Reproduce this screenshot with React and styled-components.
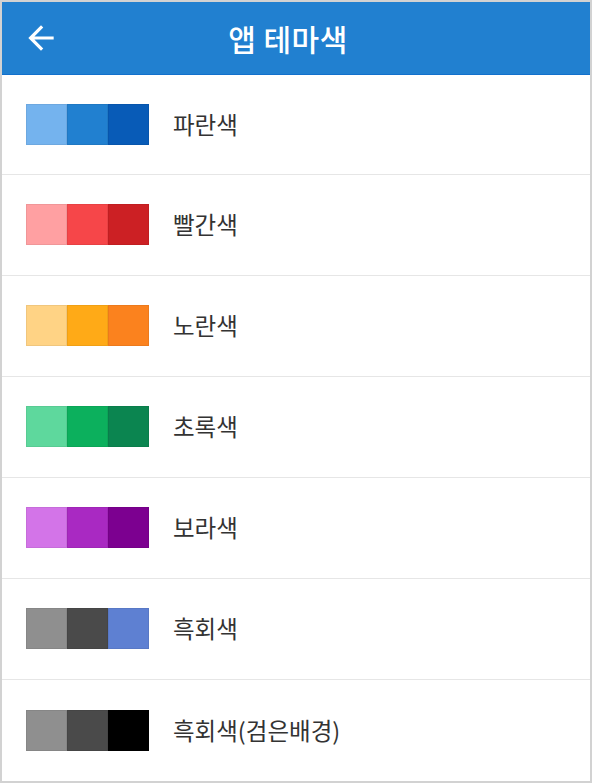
import React from "react";
import styled, { createGlobalStyle } from "styled-components";

const Global = createGlobalStyle`
  html, body { margin: 0; padding: 0; background: #fff; }
  body { font-family: "Noto Sans CJK KR", "Noto Sans", sans-serif; }
  * { box-sizing: border-box; }
`;

const Frame = styled.div`
  width: 592px;
  height: 783px;
  border: 2px solid #d2d2d2;
  display: flex;
  flex-direction: column;
  background: #fff;
  overflow: hidden;
`;

const Header = styled.header`
  height: 73px;
  flex: none;
  background: #2180d0;
  border-bottom: 1px solid #1270cc;
  display: grid;
  grid-template-columns: 80px 1fr 96px;
  align-items: center;
`;

const BackButton = styled.button`
  border: 0;
  background: transparent;
  padding: 0;
  margin-left: 20px;
  width: 38px;
  height: 38px;
  display: flex;
  align-items: center;
  justify-content: center;
  cursor: pointer;
`;

const Title = styled.h1`
  margin: 0;
  text-align: center;
  color: #fff;
  font-size: 30px;
  font-weight: 500;
  line-height: 1;
  letter-spacing: 0.5px;
`;

const List = styled.ul`
  list-style: none;
  margin: 0;
  padding: 0;
  display: flex;
  flex-direction: column;
`;

const Row = styled.li`
  height: ${(p) => (p.$first ? "100px" : "101px")};
  flex: none;
  display: flex;
  align-items: center;
  gap: 24px;
  padding: 0 0 0 24px;
  border-bottom: ${(p) => (p.$last ? "none" : "1px solid #e6e6e6")};
`;

const Swatch = styled.div`
  display: flex;
  height: 41px;
  flex: none;
  margin-top: ${(p) => (p.$last ? "0" : "-1px")};
`;

const Cell = styled.div`
  width: 41px;
  height: 41px;
  background: ${(p) => p.$color};
  box-shadow: inset 0 0 0 1px rgba(0, 0, 0, 0.06);
`;

const Label = styled.span`
  font-size: 23.5px;
  color: #333;
  line-height: 1;
`;

const themes = [
  { name: "파란색", colors: ["#74b3ee", "#2180d0", "#085bb7"] },
  { name: "빨간색", colors: ["#ffa0a2", "#f64649", "#cc2024"] },
  { name: "노란색", colors: ["#ffd385", "#ffaa17", "#fb821e"] },
  { name: "초록색", colors: ["#5ed89d", "#0cb05d", "#0b8550"] },
  { name: "보라색", colors: ["#d374e8", "#a929c2", "#7c0090"] },
  { name: "흑회색", colors: ["#8f8f8f", "#4a4a4a", "#5e80d2"] },
  { name: "흑회색(검은배경)", colors: ["#8f8f8f", "#4a4a4a", "#000000"] },
];

export default function App() {
  return (
    <>
      <Global />
      <Frame>
        <Header>
          <BackButton aria-label="back">
            <svg width="38" height="38" viewBox="0 0 24 24">
              <path
                fill="#fff"
                d="M20 11H7.83l5.59-5.59L12 4l-8 8 8 8 1.41-1.41L7.83 13H20v-2z"
              />
            </svg>
          </BackButton>
          <Title>앱 테마색</Title>
          <span />
        </Header>
        <List>
          {themes.map((t, i) => (
            <Row
              key={t.name}
              $first={i === 0}
              $last={i === themes.length - 1}
            >
              <Swatch $last={i === themes.length - 1}>
                {t.colors.map((c, j) => (
                  <Cell key={j} $color={c} />
                ))}
              </Swatch>
              <Label>{t.name}</Label>
            </Row>
          ))}
        </List>
      </Frame>
    </>
  );
}
